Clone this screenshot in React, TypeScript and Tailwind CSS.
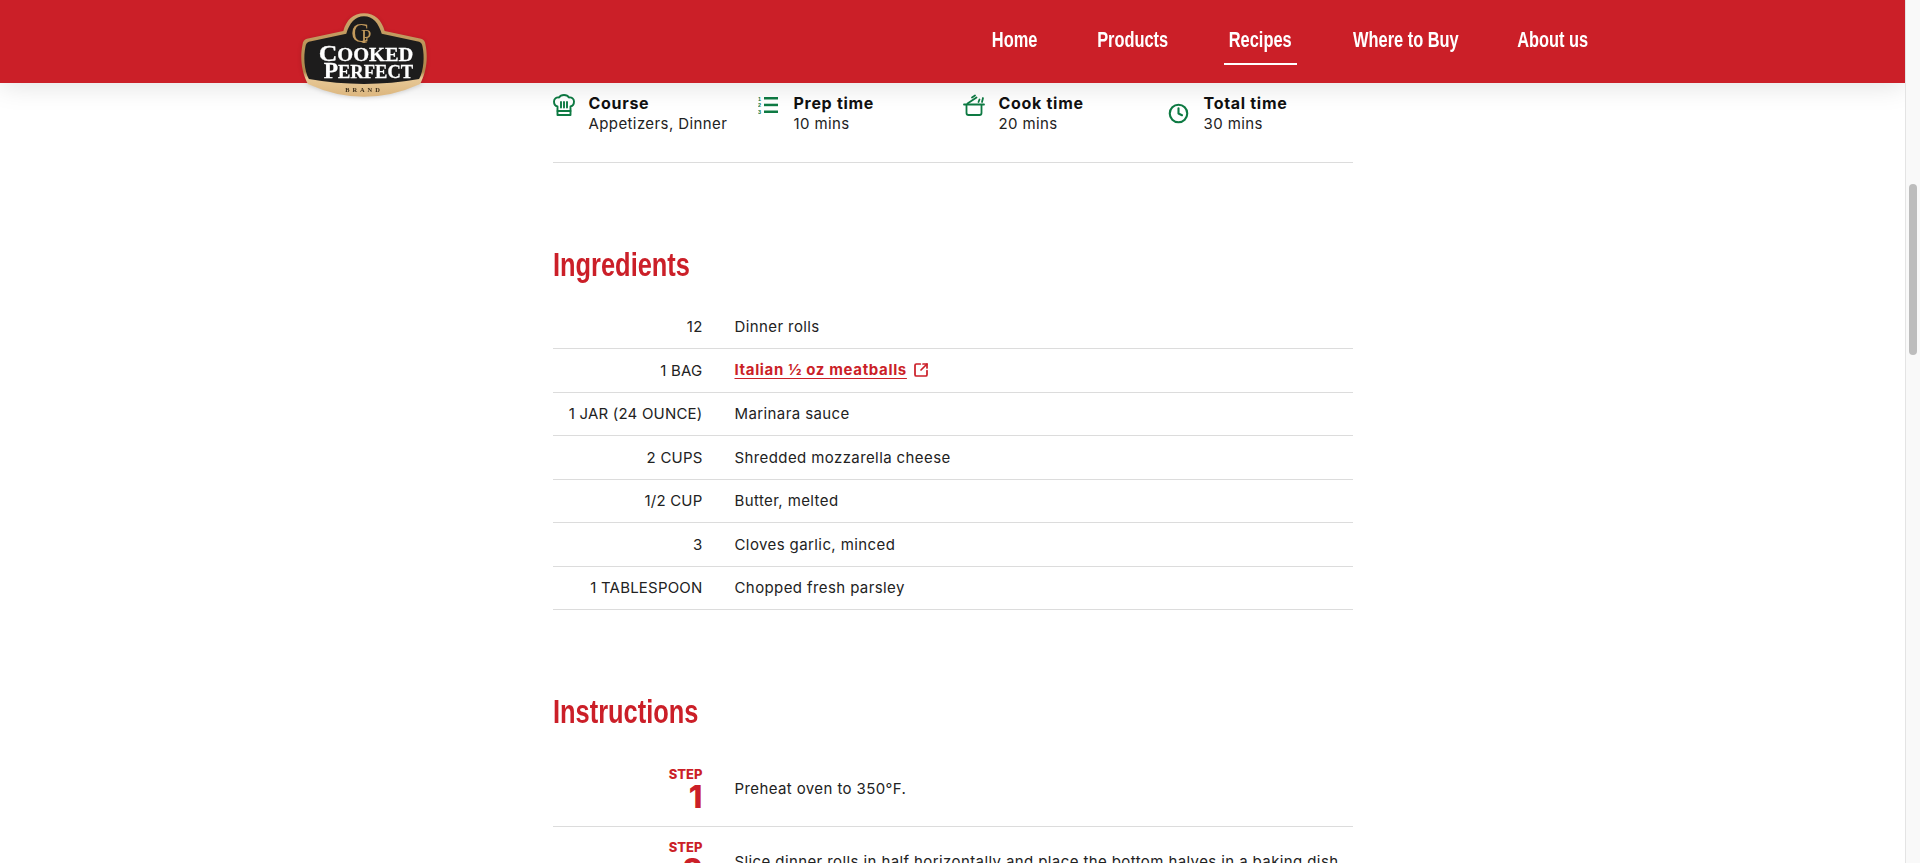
import type { ReactNode } from "react";
import { Clock, SquareArrowOutUpRight } from "lucide-react";

const nav: [string, string][] = [
  ["Home", "w-[45px]"],
  ["Products", "w-[71px]"],
  ["Recipes", "w-[64px]"],
  ["Where to Buy", "w-[107px]"],
  ["About us", "w-[68px]"],
];
const ingredients: [string, string][] = [
  ["12", "Dinner rolls"],
  ["1 BAG", "Italian ½ oz meatballs"],
  ["1 JAR (24 OUNCE)", "Marinara sauce"],
  ["2 CUPS", "Shredded mozzarella cheese"],
  ["1/2 CUP", "Butter, melted"],
  ["3", "Cloves garlic, minced"],
  ["1 TABLESPOON", "Chopped fresh parsley"],
];

function Logo() {
  const outer = "M63 3C74 3 81 10 84 21L121 29Q125 30 125.500 35C128 47 127 62 120 75Q63 101 6 75C-1 62 -2 47 .5 35Q1 30 5 29L42 21C45 10 52 3 63 3Z";
  const inner = "M63 6C72 6 78 13 81 24L119 32Q122 33 122.500 37C124.500 47 124 60 119 70Q63 80 7 70C2 60 1.500 47 3.500 37Q4 33 7 32L45 24C48 13 54 6 63 6Z";
  return (
    <svg viewBox="0 0 126 92" className="absolute left-[302px] top-[10px] w-[124px] h-[91px] overflow-visible drop-shadow-sm">
      <defs>
        <linearGradient id="g" x1="0" y1="0" x2="0" y2="1">
          <stop offset="0" stopColor="#cda76c" />
          <stop offset="0.7" stopColor="#ad854a" />
          <stop offset="0.78" stopColor="#e7c896" />
          <stop offset="1" stopColor="#dcb67e" />
        </linearGradient>
      </defs>
      <path d={outer} fill="url(#g)" />
      <path d={inner} fill="#1d1c1c" />
      <text x="63" y="83" textAnchor="middle" fontFamily="Liberation Serif" fontSize="6.500" fontWeight="700" fill="#3a2c18" letterSpacing="3">BRAND</text>
      <text x="63" y="32" textAnchor="end" dx="5" fontFamily="Liberation Serif" fontSize="27" fill="#c39a5c">C</text>
      <text x="60" y="33" fontFamily="Liberation Serif" fontSize="19" fill="#c39a5c">P</text>
      <text x="17" y="52" textLength="96" lengthAdjust="spacingAndGlyphs" fontFamily="Liberation Serif" fontWeight="700" fontSize="19" fill="#fff" stroke="#fff" strokeWidth="0.3"><tspan fontSize="24">C</tspan>OOKED</text>
      <text x="22" y="69" textLength="91" lengthAdjust="spacingAndGlyphs" fontFamily="Liberation Serif" fontWeight="700" fontSize="19" fill="#fff" stroke="#fff" strokeWidth="0.3"><tspan fontSize="24">P</tspan>ERFECT</text>
    </svg>
  );
}

function Hat() {
  return (
    <svg viewBox="0 0 22 22" className="w-[22px] h-[22px] mt-[2px] text-[#0e7a43]" fill="none" stroke="currentColor" strokeWidth="1.900" strokeLinejoin="round" strokeLinecap="round">
      <path d="M4.500 17h13" />
      <path d="M4.500 21h13V12.500C19.500 12 21 10 21 7.500 21 4.500 18.500 3 16 3.500 15 1.800 13 1 11 1S7 1.800 6 3.500C3.500 3 1 4.500 1 7.500 1 10 2.500 12 4.500 12.500V21Z" />
      <path d="M8 8v5.500M11 8v5.500M14 8v5.500" />
    </svg>
  );
}

function ListIcon() {
  return (
    <svg viewBox="0 0 20 18" className="w-[20px] h-[18px] mt-[4px] text-[#0e7a43]" fill="currentColor">
      <rect x="6" y="1" width="14" height="2.500" />
      <rect x="6" y="7.700" width="14" height="2.500" />
      <rect x="6" y="14.500" width="14" height="2.500" />
      <text x="0" y="5" fontFamily="Liberation Sans" fontWeight="700" fontSize="5.500">1</text>
      <text x="0" y="11" fontFamily="Liberation Sans" fontWeight="700" fontSize="5.500">2</text>
      <text x="0" y="17.500" fontFamily="Liberation Sans" fontWeight="700" fontSize="5.500">3</text>
    </svg>
  );
}

function Pot() {
  return (
    <svg viewBox="0 0 22 22" className="w-[22px] h-[22px] mt-[2px] text-[#0e7a43]" fill="none" stroke="currentColor" strokeWidth="1.800" strokeLinecap="round" strokeLinejoin="round">
      <path d="M3.500 11v8a2 2 0 0 0 2 2h11a2 2 0 0 0 2-2v-8" />
      <path d="M1 10.500h20" />
      <path d="M4.500 9.500 13.500 3.500M9 3.500 12 1.500M15.500 8l1-2.500M19 8l1-4" />
    </svg>
  );
}

function Meta({ icon, label, value }: { icon: ReactNode; label: string; value: string }) {
  return (
    <div className="w-[205px] shrink-0 flex items-start gap-[14px]">
      <div className="w-[22px] h-[42px] flex flex-col items-start shrink-0">{icon}</div>
      <div className="text-[15px] leading-[21px] tracking-[0.4px] whitespace-nowrap">
        <div className="font-bold text-[16px] tracking-[0.7px] text-[#111] pt-[1px] h-[21px]">{label}</div>
        <div className="text-[#222]">{value}</div>
      </div>
    </div>
  );
}

function Step({ n, text }: { n: number; text: string }) {
  return (
    <div className="grid grid-cols-[150px_1fr] gap-x-8 items-center border-b border-[#dcdcdc] pt-[12px] pb-[14px]">
      <div className="text-right text-[#cb1f28]">
        <div className="text-[13px] leading-[16px] font-extrabold">STEP</div>
        <div className="text-[31px] leading-[30px] font-extrabold">{n}</div>
      </div>
      <div className="text-[15px] tracking-[0.4px] text-[#222] whitespace-nowrap pt-[2px]">{text}</div>
    </div>
  );
}

function Heading({ children }: { children: string }) {
  return (
    <h2 className="h-[40px] font-['Liberation_Sans',sans-serif] text-[33px] leading-[40px] text-[#cb1f28] font-bold origin-left scale-x-[0.77]">
      {children}
    </h2>
  );
}

export default function App() {
  return (
    <div className="h-[863px] overflow-hidden flex bg-white font-['Inter',sans-serif]">
      <div className="relative flex-1 min-w-0 overflow-hidden">
        <header className="relative z-10 h-[83px] bg-[#cb1f28] shadow-[0_2px_28px_rgba(0,0,0,0.13)]">
          <Logo />
          <nav className="flex justify-end pr-[318px] gap-[60px] pt-[25px] font-['Liberation_Sans',sans-serif] text-[22px] leading-[30px] text-white font-bold">
            {nav.map(([n, w]) => (
              <a key={n} className={`relative flex justify-center whitespace-nowrap ${w}`}>
                <span className="scale-x-[0.745]">{n}</span>
                {n === "Recipes" && <span className="absolute -left-[4px] -right-[5px] top-[38px] h-[2px] bg-white" />}
              </a>
            ))}
          </nav>
        </header>
        <main className="mx-auto w-[800px]">
          <section className="flex pt-[9px] h-[80px] border-b border-[#dcdcdc]">
            <Meta icon={<Hat />} label="Course" value="Appetizers, Dinner" />
            <Meta icon={<ListIcon />} label="Prep time" value="10 mins" />
            <Meta icon={<Pot />} label="Cook time" value="20 mins" />
            <Meta icon={<Clock className="w-[21px] h-[21px] mt-[11px] text-[#0e7a43]" strokeWidth={2.4} />} label="Total time" value="30 mins" />
          </section>
          <div className="mt-[82px] mb-[20.500px]">
            <Heading>Ingredients</Heading>
          </div>
          <div>
            {ingredients.map(([q, name], i) => (
              <div key={name} className="grid grid-cols-[150px_1fr] gap-x-8 items-center h-[43.500px] pt-[1px] border-b border-[#dcdcdc] text-[15px] tracking-[0.4px] text-[#222]">
                <div className="text-right tracking-[0.2px]">{q}</div>
                {i === 1 ? (
                  <div className="flex items-center gap-[6px] -mt-[1px] text-[#cb1f28] font-bold tracking-[0.65px]">
                    <a className="underline underline-offset-[3px]">{name}</a>
                    <SquareArrowOutUpRight className="w-[16px] h-[16px]" strokeWidth={2.6} />
                  </div>
                ) : (
                  <div>{name}</div>
                )}
              </div>
            ))}
          </div>
          <div className="mt-[81.500px] mb-[22px]">
            <Heading>Instructions</Heading>
          </div>
          <Step n={1} text="Preheat oven to 350°F." />
          <Step n={2} text="Slice dinner rolls in half horizontally and place the bottom halves in a baking dish." />
        </main>
      </div>
      <aside className="w-[15px] shrink-0 bg-[#f9f9f9] border-l border-[#e4e4e4] pl-[3px] pt-[184px]">
        <div className="w-[8px] h-[171px] rounded-full bg-[#bdbdbd]" />
      </aside>
    </div>
  );
}
